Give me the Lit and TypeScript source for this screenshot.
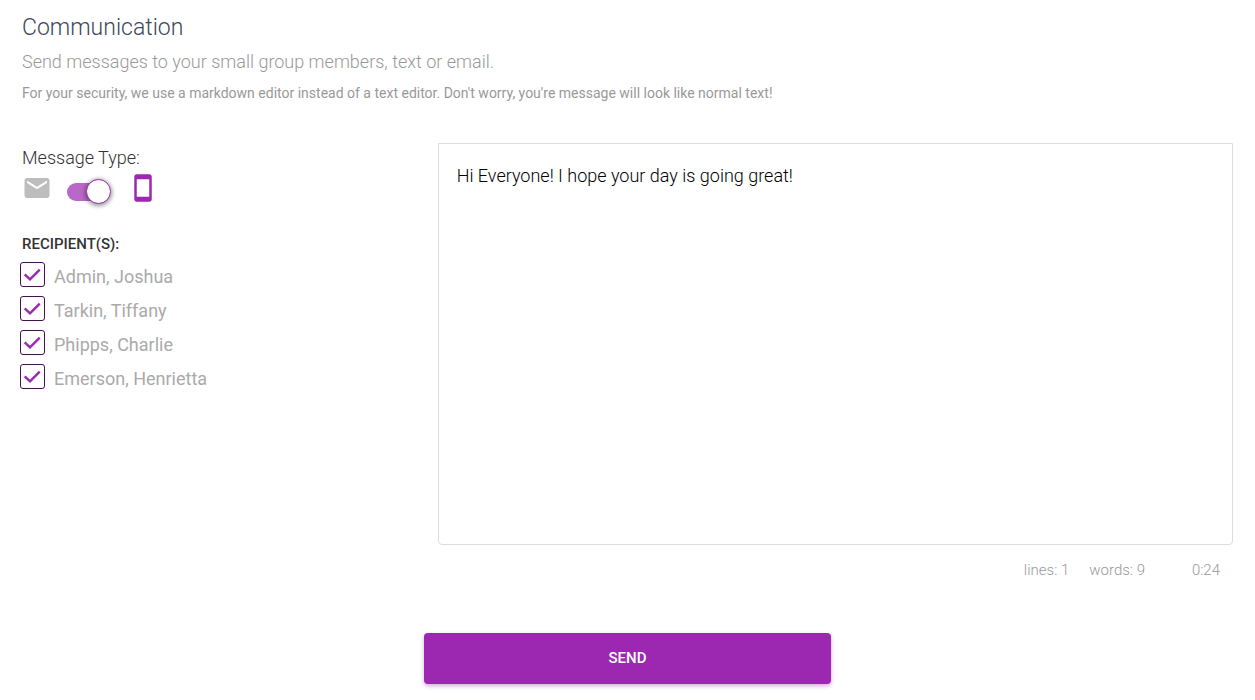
import { LitElement, css, html } from 'lit';
import { customElement, state } from 'lit/decorators.js';

interface Recipient {
  name: string;
  selected: boolean;
}

@customElement('app-root')
export class AppRoot extends LitElement {
  @state() private textMode = true;
  @state() private message = 'Hi Everyone! I hope your day is going great!';
  @state() private recipients: Recipient[] = [
    { name: 'Admin, Joshua', selected: true },
    { name: 'Tarkin, Tiffany', selected: true },
    { name: 'Phipps, Charlie', selected: true },
    { name: 'Emerson, Henrietta', selected: true },
  ];

  static styles = css`
    :host {
      display: block;
      --accent: #9c27b0;
      --muted: #999;
      color: #3c4858;
      background: #fff;
      font-family: Roboto, 'Liberation Sans', sans-serif;
      font-weight: 300;
    }
    * {
      box-sizing: border-box;
    }
    header {
      padding: 11px 22px 0;
    }
    h1,
    p {
      margin: 0;
    }
    h1 {
      font-size: 23px;
      line-height: 34px;
      font-weight: 300;
    }
    .lead {
      font-size: 18px;
      line-height: 34px;
      color: var(--muted);
    }
    .note {
      font-size: 14px;
      line-height: 28px;
      font-weight: 400;
      color: var(--muted);
    }
    main {
      display: grid;
      grid-template-columns: minmax(0, 1fr) minmax(0, 2fr);
      gap: 18px;
      padding: 36px 22px 0;
    }
    .type-label {
      display: block;
      padding-top: 2px;
      font-size: 18px;
      line-height: 26px;
      color: #333;
    }
    .type-row {
      display: flex;
      align-items: flex-start;
      padding-top: 2px;
    }
    .icon {
      width: 30px;
      height: 30px;
      fill: #bdbdbd;
    }
    .icon.on {
      fill: var(--accent);
    }
    .switch {
      appearance: none;
      display: flex;
      align-items: center;
      width: 45px;
      height: 25px;
      margin: 6px 16px 0 15px;
      cursor: pointer;
    }
    .switch::before {
      content: '';
      width: 40px;
      height: 18px;
      border-radius: 9px;
      background: #bdbdbd;
    }
    .switch:checked::before {
      background: #ba68c8;
    }
    .switch::after {
      content: '';
      box-sizing: border-box;
      flex: none;
      width: 25px;
      height: 25px;
      margin-left: -40px;
      border: 1px solid var(--accent);
      border-radius: 50%;
      background: #fff;
      box-shadow: 0 1px 4px 1px rgba(0, 0, 0, 0.4);
    }
    .switch:checked::after {
      margin-left: -21px;
    }
    .recipients {
      min-width: 0;
      margin: 0;
      padding: 4px 0 0;
      border: 0;
    }
    .recipients legend {
      padding: 29px 0 0;
      font-size: 15px;
      line-height: 22px;
      font-weight: 500;
      color: #333;
    }
    .recipient {
      display: flex;
      align-items: center;
      gap: 9px;
      height: 34px;
      margin-left: -2px;
      font-size: 18px;
      line-height: 28px;
      font-weight: 400;
      color: #aaa;
      cursor: pointer;
    }
    .name {
      padding-top: 2px;
    }
    .box {
      display: grid;
      flex: none;
      width: 25px;
      height: 25px;
      margin-bottom: 4px;
    }
    .box > * {
      grid-area: 1 / 1;
      width: 25px;
      height: 25px;
    }
    .box input {
      appearance: none;
      margin: 0;
      border: 1px solid #4a0e55;
      border-radius: 3px;
      background: #fff;
      cursor: pointer;
    }
    .box svg {
      fill: none;
      stroke: var(--accent);
      stroke-width: 2.4;
      pointer-events: none;
      visibility: hidden;
    }
    .box input:checked + svg {
      visibility: visible;
    }
    textarea {
      display: block;
      width: 100%;
      height: 402px;
      padding: 18px;
      border: 1px solid #ddd;
      border-radius: 0 0 4px 4px;
      outline: none;
      resize: none;
      background: #fff;
      color: #000;
      font: inherit;
      font-size: 18px;
      line-height: 28px;
    }
    .status {
      display: flex;
      justify-content: flex-end;
      gap: 20px;
      padding: 14px 13px 0 0;
      font-size: 15px;
      line-height: 22px;
      color: var(--muted);
    }
    .cursor {
      min-width: 55px;
      text-align: right;
    }
    footer {
      display: grid;
      grid-template-columns: repeat(3, minmax(0, 1fr));
      padding: 52px 17px 16px;
    }
    .send {
      grid-column: 2;
      height: 51px;
      padding: 0 0 2px;
      border: 0;
      border-radius: 4px;
      background: var(--accent);
      color: #fff;
      font: inherit;
      font-size: 15px;
      font-weight: 500;
      box-shadow: 0 2px 4px rgba(156, 39, 176, 0.4);
      cursor: pointer;
    }
  `;

  private toggleRecipient(index: number) {
    this.recipients = this.recipients.map((r, i) =>
      i === index ? { ...r, selected: !r.selected } : r
    );
  }

  render() {
    const words = this.message.trim() ? this.message.trim().split(/\s+/).length : 0;
    const lines = this.message.split('\n').length;
    return html`
      <header>
        <h1>Communication</h1>
        <p class="lead">Send messages to your small group members, text or email.</p>
        <p class="note">
          For your security, we use a markdown editor instead of a text editor. Don't worry, you're
          message will look like normal text!
        </p>
      </header>
      <main>
        <section>
          <label class="type-label" for="message-type">Message Type:</label>
          <div class="type-row">
            <svg class="icon ${this.textMode ? '' : 'on'}" viewBox="0 0 24 24" aria-hidden="true">
              <path
                d="M20 4H4c-1.1 0-1.99.9-1.99 2L2 18c0 1.1.9 2 2 2h16c1.1 0 2-.9 2-2V6c0-1.1-.9-2-2-2zm0 4l-8 5-8-5V6l8 5 8-5v2z"
              />
            </svg>
            <input
              id="message-type"
              class="switch"
              type="checkbox"
              role="switch"
              .checked=${this.textMode}
              @change=${() => (this.textMode = !this.textMode)}
            />
            <svg class="icon ${this.textMode ? 'on' : ''}" viewBox="0 0 24 24" aria-hidden="true">
              <path
                d="M17 1.01L7 1c-1.1 0-1.99.9-1.99 2v18c0 1.1.89 2 1.99 2h10c1.1 0 2-.9 2-2V3c0-1.1-.9-1.99-2-1.99zM17 19H7V5h10v14z"
              />
            </svg>
          </div>
          <fieldset class="recipients">
            <legend>RECIPIENT(S):</legend>
            ${this.recipients.map(
              (r, i) => html`
                <label class="recipient">
                  <span class="box">
                    <input
                      type="checkbox"
                      .checked=${r.selected}
                      @change=${() => this.toggleRecipient(i)}
                    />
                    <svg viewBox="0 0 25 25" aria-hidden="true">
                      <path d="M4.7 12.3L10 17.3L19.7 7.7" />
                    </svg>
                  </span>
                  <span class="name">${r.name}</span>
                </label>
              `
            )}
          </fieldset>
        </section>
        <section>
          <textarea
            aria-label="Message"
            spellcheck="false"
            .value=${this.message}
            @input=${(e: Event) => (this.message = (e.target as HTMLTextAreaElement).value)}
          ></textarea>
          <div class="status">
            <span>lines: ${lines}</span>
            <span>words: ${words}</span>
            <span class="cursor">0:24</span>
          </div>
        </section>
      </main>
      <footer>
        <button class="send" type="button">SEND</button>
      </footer>
    `;
  }
}
